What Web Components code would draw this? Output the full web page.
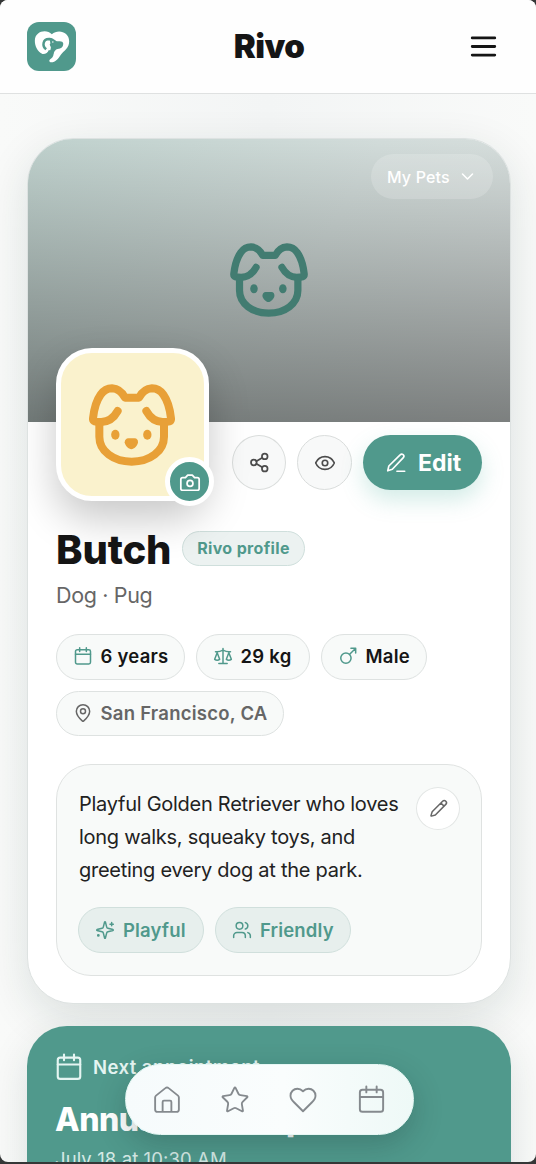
<!DOCTYPE html>
<html lang="en"><head><meta charset="utf-8"><title>Rivo</title>
<style>
html,body{margin:0;background:#353737;height:1164px;overflow:hidden}
body{font-family:Inter,"Liberation Sans",sans-serif;color:#151515;font-optical-sizing:none}
</style></head><body><rivo-app></rivo-app>
<script>
const define=(name,html)=>{
  const t=document.createElement('template');t.innerHTML=html;
  customElements.define(name,class extends HTMLElement{
    constructor(){super();this.attachShadow({mode:'open'}).append(t.content.cloneNode(true));}
  });
};
const icons={
  calendar:'<rect x="3" y="4.5" width="18" height="17" rx="2"/><path d="M8 2v4.5M16 2v4.5M3 10h18"/>',
  scale:'<path d="m16 16 3-8 3 8c-.87.65-1.92 1-3 1s-2.13-.35-3-1ZM2 16l3-8 3 8c-.87.65-1.92 1-3 1s-2.13-.35-3-1ZM7 21h10M12 3v18M3 7h2c2 0 5-1 7-2 2 1 5 2 7 2h2"/>',
  male:'<circle cx="9.5" cy="14.5" r="6.2"/><path d="M14 10 21 3M15.500 2.800h5.700v5.700"/>',
  pin:'<path d="M20 10c0 5-5.540 10.190-7.400 11.800a1 1 0 0 1-1.200 0C9.540 20.190 4 15 4 10a8 8 0 0 1 16 0"/><circle cx="12" cy="10" r="3"/>',
  sparkles:'<path d="M9.940 15.500A2 2 0 0 0 8.500 14.060l-6.140-1.580a.5.5 0 0 1 0-.96L8.500 9.940A2 2 0 0 0 9.940 8.500l1.580-6.140a.5.5 0 0 1 .96 0l1.580 6.140a2 2 0 0 0 1.440 1.440l6.140 1.580a.5.5 0 0 1 0 .96l-6.140 1.580a2 2 0 0 0-1.440 1.440l-1.580 6.140a.5.5 0 0 1-.96 0zM20 3v4M22 5h-4"/><circle cx="4" cy="18.500" r=".8"/>',
  users:'<path d="M16 21v-2a4 4 0 0 0-4-4H6a4 4 0 0 0-4 4v2M22 21v-2a4 4 0 0 0-3-3.870M16 3.130a4 4 0 0 1 0 7.750"/><circle cx="9" cy="7" r="4"/>',
  share:'<circle cx="18" cy="5" r="3.200"/><circle cx="5.500" cy="12" r="3.200"/><circle cx="18" cy="19" r="3.200"/><path d="m8.400 13.500 6.800 4M15.200 6.500l-6.800 4"/>',
  eye:'<path d="M2 12.300a1 1 0 0 1 0-.7C3.800 7.500 7.700 5 12 5s8.200 2.500 10 6.600a1 1 0 0 1 0 .7C20.200 16.500 16.300 19 12 19S3.800 16.500 2 12.300"/><circle cx="12" cy="12" r="3"/>',
  edit:'<path d="M13 21h8.500M3 20.500l1.200-5.200L16.500 3.200a2.300 2.300 0 0 1 3.500 3L8 18.800z"/>',
  pencil:'<path d="M21.200 6.800a2.800 2.800 0 0 0-4-4L4 16.200 2.500 21a.5.5 0 0 0 .6.600L8 20.200zM15 5l4 4"/>',
  camera:'<path d="M14.500 4.500h-5L7 7.300H4a2 2 0 0 0-2 2V19a2 2 0 0 0 2 2h16a2 2 0 0 0 2-2V9.300a2 2 0 0 0-2-2h-3z"/><circle cx="12" cy="13.500" r="3.200"/>',
  chevron:'<path d="m4 8 8 8 8-8"/>',
  menu:'<path d="M2 4.400h20M2 12h20M2 19.600h20"/>',
  home:'<path d="M15.500 21.500v-8a1 1 0 0 0-1-1h-5a1 1 0 0 0-1 1v8M2.500 10a2 2 0 0 1 .7-1.500l7.500-6a2 2 0 0 1 2.600 0l7.500 6a2 2 0 0 1 .7 1.500v9.500a2 2 0 0 1-2 2h-15a2 2 0 0 1-2-2z"/>',
  star:'<path d="M11.500 2.300a.53.53 0 0 1 .95 0l2.310 4.680a2.100 2.100 0 0 0 1.600 1.160l5.170.76a.53.53 0 0 1 .29.900l-3.730 3.640a2.100 2.100 0 0 0-.62 1.880l.88 5.140a.53.53 0 0 1-.77.560l-4.620-2.430a2.100 2.100 0 0 0-1.970 0L6.400 21.010a.53.53 0 0 1-.77-.56l.88-5.140a2.100 2.100 0 0 0-.62-1.880L2.160 9.800a.53.53 0 0 1 .29-.9l5.170-.76a2.100 2.100 0 0 0 1.600-1.160z"/>',
  heart:'<path d="M19 14c1.500-1.500 3-3.200 3-5.500A5.500 5.500 0 0 0 16.500 3c-1.800 0-3 .5-4.500 2-1.500-1.500-2.700-2-4.500-2A5.500 5.500 0 0 0 2 8.500c0 2.300 1.500 4 3 5.500l7 7z"/>'
};
customElements.define('rivo-icon',class extends HTMLElement{
  connectedCallback(){
    if(this.shadowRoot)return;
    const s=this.getAttribute('size')||20,w=this.getAttribute('stroke')||1.8;
    this.attachShadow({mode:'open'}).innerHTML=`<style>:host{display:block;flex:none;width:${s}px;height:${s}px}svg{display:block;overflow:visible}</style>
    <svg width="${s}" height="${s}" viewBox="0 0 24 24" fill="none" stroke="currentColor" stroke-width="${w}" stroke-linecap="round" stroke-linejoin="round">${icons[this.getAttribute('name')]}</svg>`;
  }
});
define('pet-face',`<style>:host{display:block}svg{display:block;width:100%;height:100%}</style>
<svg viewBox="148 160 258 246" fill="none" stroke="currentColor" stroke-width="24" stroke-linecap="round" stroke-linejoin="round">
<path d="M234 241C223 261 208 273 185 274C168 274 159 273 160 263C163 236 170 210 183 192C193 178 204 173 217 173C234 174 247 184 256 201H298C307 184 320 174 337 173C350 173 361 178 371 192C384 210 391 236 394 263C395 273 386 274 369 274C346 273 331 261 320 241"/>
<path d="M179 278V318C179 362 222 393 276 393S373 362 373 318V278"/>
<g fill="currentColor" stroke="none"><ellipse cx="227" cy="312" rx="12.500" ry="15"/><ellipse cx="323" cy="312" rx="12.500" ry="15"/><path d="M266 323H285Q295 324 295 335C294 345 283 356 275 356S256 345 255 335Q256 324 266 323Z"/></g></svg>`);
define('rivo-logo',`<style>:host{display:block;width:49px;height:49px;border-radius:12px;background:#50998c}svg{display:block}</style>
<svg width="49" height="49" viewBox="79 66 146 147"><path fill="#fff" d="M125 162C110 154 102 139 102 122C102 94 137 86 153 103C172 86 205 96 205 124C205 145 190 152 180 164C172 176 164 187 151 187C144 186 144 180 149 177C158 172 160 162 157 154L144 150Q139 163 125 162Z"/>
<path fill="#50998c" d="M146 113C157 113 163 123 171 124Q186 122 187 129C188 138 184 145 174 146C164 147 161 153 158 161C152 166 143 166 142 161C148 154 151 146 150 139Z"/>
<path d="M136 148C123 138 126 117 144 117C157 118 157 133 148 137" fill="none" stroke="#50998c" stroke-width="7.500"/><circle cx="156" cy="126" r="2.200" fill="#fff"/></svg>`);
define('app-header',`<style>:host{display:grid;grid-template-columns:49px 1fr 49px;align-items:center;box-sizing:border-box;height:94px;padding:0 27px;border-bottom:1px solid #dfe1e1;background:#fefefe}
h1{margin:0;text-align:center;font-size:33px;line-height:40px;font-weight:860;letter-spacing:-.5px;padding:0 0 2px 2px}rivo-icon{justify-self:end;margin-right:12px}</style>
<rivo-logo></rivo-logo><h1>Rivo</h1><rivo-icon name="menu" size="27" stroke="2.500"></rivo-icon>`);
define('pet-cover',`<style>:host{display:block;box-sizing:border-box;height:283px;padding:15px 17px;background:linear-gradient(180deg,rgba(0,0,0,0),rgba(0,0,0,.43)),linear-gradient(120deg,#bfd1cd,#d2dcda 55%,#dae0df)}
.pets{display:flex;align-items:center;box-sizing:border-box;width:122px;height:45px;margin-left:auto;padding:0 18px 0 16px;border-radius:23px;background:rgba(255,255,255,.18);color:#fff;font-size:16px;font-weight:500;letter-spacing:.15px;justify-content:space-between}
pet-face{width:78px;height:74px;margin:44px auto 0;color:#427c71}</style>
<div class="pets"><slot></slot><rivo-icon name="chevron" size="15" stroke="2.500"></rivo-icon></div><pet-face></pet-face>`);
define('pet-avatar',`<style>:host{display:block;position:relative;box-sizing:border-box;width:153px;height:153px;border:5px solid #fff;border-radius:36px;background:#faf2cd;box-shadow:0 18px 40px rgba(0,0,0,.22);color:#e8a037}
pet-face{width:86px;height:82px;margin:30.500px auto 0 28px}.badge{position:absolute;right:-10px;bottom:-10px;display:grid;place-items:center;width:39px;height:39px;border:5px solid #fff;border-radius:50%;background:#50998c;color:#fff}</style>
<pet-face></pet-face><div class="badge"><rivo-icon name="camera" size="22" stroke="1.900"></rivo-icon></div>`);
define('round-button',`<style>:host{display:grid;place-items:center;box-sizing:border-box;width:55px;height:55px;border:1px solid #dadddc;border-radius:50%;background:#f8f9f9;color:#4c4c4c}</style><slot></slot>`);
define('edit-button',`<style>:host{display:flex;align-items:center;gap:11px;box-sizing:border-box;width:119px;height:55px;padding-left:22px;border-radius:28px;background:#50998c;color:#fff;font-size:23px;font-weight:700;box-shadow:0 10px 22px rgba(80,180,160,.25)}</style><rivo-icon name="edit" size="22" stroke="1.800"></rivo-icon><slot></slot>`);
define('info-chip',`<style>:host{display:flex;align-items:center;gap:8px;box-sizing:border-box;height:46px;padding:0 0 2px 15.500px;border:1px solid #dee2e1;border-radius:23px;background:#f8faf9;font-size:18.500px;font-weight:600;letter-spacing:.25px;white-space:nowrap}
:host([muted]){color:#666;height:45px}:host([tag]){background:#e7efed;border-color:#d0dfdc;color:#50998c;padding:0 0 1px 16px;letter-spacing:.15px}</style><slot name="icon"></slot><slot></slot>`);
define('pet-bio',`<style>:host{display:block;box-sizing:border-box;height:212px;padding:23px 21px 20px 22px;border:1px solid #dfe2e1;border-radius:35px;background:#f8faf9}
.row{display:flex;justify-content:space-between;height:99px}p{margin:0;font-size:20px;line-height:33px;letter-spacing:-.27px;color:#222;white-space:nowrap}
round-button{width:44px;height:43px;background:#fff;border-color:#e3e6e5;color:#666;margin-top:-1px}.tags{display:flex;gap:11px;margin:20px 0 0 -1px}slot[name=tags]{display:contents}</style>
<div class="row"><p><slot></slot></p><round-button><rivo-icon name="pencil" size="19" stroke="1.900"></rivo-icon></round-button></div><div class="tags"><slot name="tags"></slot></div>`);
define('pet-card',`<style>:host{display:block;box-sizing:border-box;height:866px;border:1px solid #dde2e1;border-radius:46px;background:#fff;box-shadow:0 14px 46px rgba(20,50,45,.12);overflow:hidden}
.body{padding:0 28px}.top{display:flex;align-items:flex-start;height:79px}pet-avatar{margin-top:-74px}.actions{display:flex;gap:11px;margin:13px 0 0 auto}
.name{display:flex;align-items:center;gap:12px;margin-top:25px;height:48px}h2{margin:0;font-size:40px;font-weight:850;letter-spacing:-.150px;line-height:48px;width:114px;white-space:nowrap}
.badge{box-sizing:border-box;width:123px;height:35px;border:1px solid #cfdfdc;border-radius:18px;background:#ecf2f1;color:#50998c;font-size:16px;font-weight:650;line-height:33px;text-align:center;letter-spacing:.35px;margin-top:-4px}
.kind{font-size:21.500px;line-height:28px;letter-spacing:-.35px;color:#666;margin-top:7px}.chips{display:flex;flex-wrap:wrap;gap:11px;margin-top:25px}pet-bio{margin-top:28px}</style>
<pet-cover>My Pets</pet-cover><div class="body"><div class="top"><pet-avatar></pet-avatar><div class="actions"><round-button style="width:54px"><rivo-icon name="share" size="21" stroke="2"></rivo-icon></round-button><round-button><rivo-icon name="eye" size="22"></rivo-icon></round-button><edit-button>Edit</edit-button></div></div>
<div class="name"><h2>Butch</h2><span class="badge">Rivo profile</span></div><div class="kind">Dog · Pug</div>
<div class="chips"><info-chip style="width:129px"><rivo-icon slot="icon" name="calendar" style="color:#50998c"></rivo-icon>6 years</info-chip><info-chip style="width:114px"><rivo-icon slot="icon" name="scale" style="color:#50998c"></rivo-icon>29 kg</info-chip><info-chip style="width:106px"><rivo-icon slot="icon" name="male" style="color:#50998c"></rivo-icon>Male</info-chip><info-chip muted style="width:228px"><rivo-icon slot="icon" name="pin"></rivo-icon>San Francisco, CA</info-chip></div>
<pet-bio>Playful Golden Retriever who loves<br>long walks, squeaky toys, and<br>greeting every dog at the park.<info-chip slot="tags" tag style="width:126px"><rivo-icon slot="icon" name="sparkles"></rivo-icon>Playful</info-chip><info-chip slot="tags" tag style="width:136px"><rivo-icon slot="icon" name="users"></rivo-icon>Friendly</info-chip></pet-bio></div>`);
define('appointment-card',`<style>:host{display:block;box-sizing:border-box;height:220px;padding:27px 29px;border-radius:40px;background:#50998c;color:#fff;box-shadow:0 14px 40px rgba(20,50,45,.12)}
.label{display:flex;align-items:center;gap:9px;height:27px;margin-left:-2px;font-size:18.500px;font-weight:600;letter-spacing:.45px;color:#e5f5f2}h3{margin:21px 0 0 -1px;font-size:32px;line-height:38px;font-weight:850;letter-spacing:-.5px}p{margin:7px 0 0 -1px;font-size:18.500px;line-height:26px;letter-spacing:.1px;color:#d5e9e5}</style>
<div class="label"><rivo-icon name="calendar" size="30" stroke="1.700"></rivo-icon>Next appointment</div><h3>Annual checkup</h3><p>July 18 at 10:30 AM</p>`);
define('nav-bar',`<style>:host{display:flex;align-items:center;justify-content:space-between;box-sizing:border-box;width:289px;height:71px;padding:0 26px;border-radius:36px;border:1px solid #e6f7f4;background:linear-gradient(90deg,#f6fbfc,#fafdfd 55%,#eef9f7);color:#858a8e;box-shadow:0 10px 30px rgba(20,40,40,.24)}</style>
<rivo-icon name="home" size="30" stroke="1.500"></rivo-icon><rivo-icon name="star" size="30" stroke="1.500"></rivo-icon><rivo-icon name="heart" size="30" stroke="1.500"></rivo-icon><rivo-icon name="calendar" size="31" stroke="1.500"></rivo-icon>`);
define('rivo-app',`<style>:host{display:block;position:relative;box-sizing:border-box;width:536px;height:1162px;border-radius:8px;overflow:hidden;background:linear-gradient(90deg,#f9faf9,#f3f5f5 50%,#f9faf9)}
main{display:flex;flex-direction:column;gap:22px;padding:44px 25px 0 27px}nav-bar{position:absolute;left:124.500px;top:1064px}</style>
<app-header></app-header><main><pet-card></pet-card><appointment-card></appointment-card></main><nav-bar></nav-bar>`);
</script></body></html>
